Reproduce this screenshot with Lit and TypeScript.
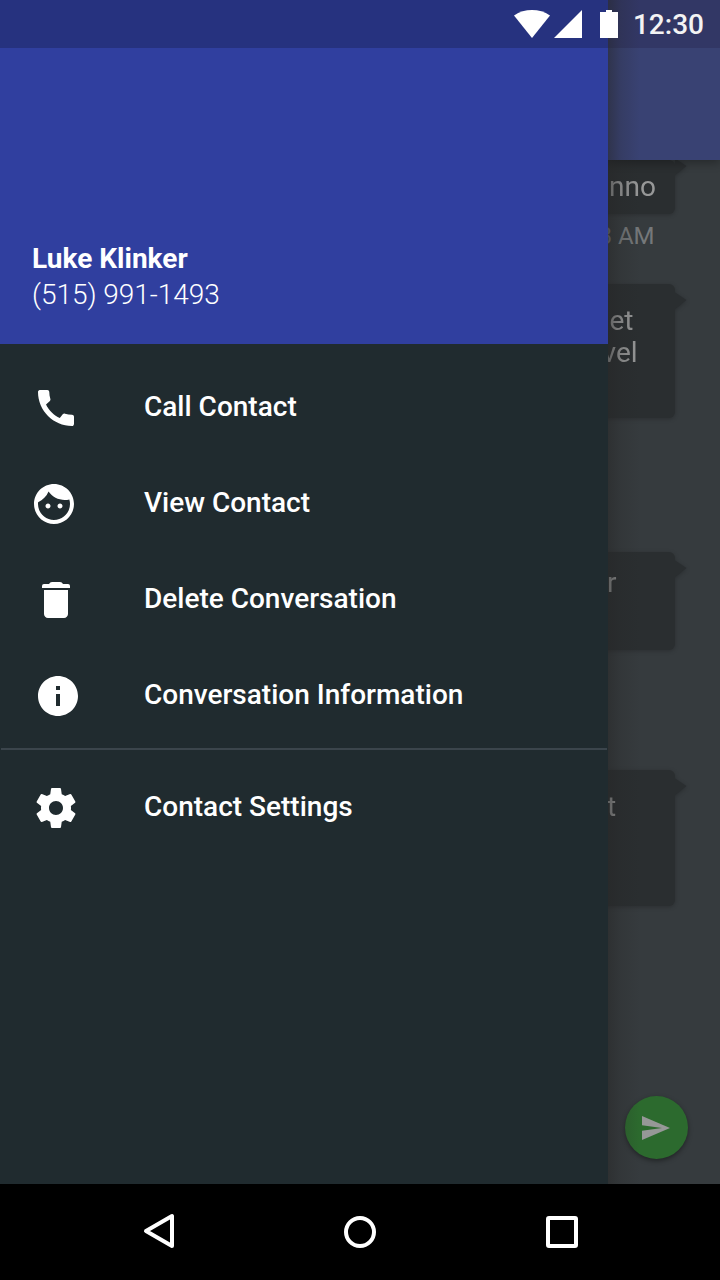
import { LitElement, html, css, svg } from "lit";
import { customElement } from "lit/decorators.js";

const ICONS = {
  call: "M20.01 15.38c-1.23 0-2.42-.2-3.53-.56-.35-.12-.74-.03-1.01.24l-1.57 1.97c-2.83-1.35-5.48-3.9-6.89-6.83l1.95-1.66c.27-.28.35-.67.24-1.02-.37-1.11-.56-2.3-.56-3.53 0-.54-.45-.99-.99-.99H4.19C3.65 3 3 3.24 3 3.99 3 13.28 10.73 21 20.01 21c.71 0 .99-.63.99-1.18v-3.45c0-.54-.45-.99-.99-.99z",
  face: "M9 11.75c-.69 0-1.25.56-1.25 1.25s.56 1.25 1.25 1.25 1.25-.56 1.25-1.25-.56-1.25-1.25-1.25zm6 0c-.69 0-1.25.56-1.25 1.25s.56 1.25 1.25 1.25 1.25-.56 1.25-1.25-.56-1.25-1.25-1.25zM12 2C6.48 2 2 6.48 2 12s4.48 10 10 10 10-4.48 10-10S17.52 2 12 2zm0 18c-4.41 0-8-3.59-8-8 0-.29.02-.58.05-.86 2.36-1.05 4.23-2.98 5.21-5.37C11.07 8.33 14.05 10 17.42 10c.78 0 1.53-.09 2.25-.26.21.71.33 1.47.33 2.26 0 4.41-3.59 8-8 8z",
  trash: "M6 19c0 1.1.9 2 2 2h8c1.1 0 2-.9 2-2V7H6v12zM18 4h-2.500Q15 3 14 3h-4Q9 3 8.500 4H6Q5 4 5 5v1h14V5Q19 4 18 4z",
  info: "M12 2C6.48 2 2 6.480 2 12s4.480 10 10 10 10-4.480 10-10S17.520 2 12 2zm1 15h-2v-6h2v6zm0-8h-2V7h2v2z",
  gear: "M19.430 12.980c.04-.32.07-.64.07-.98s-.03-.66-.07-.98l2.110-1.650c.19-.15.24-.42.12-.64l-2-3.460c-.12-.22-.39-.3-.61-.22l-2.490 1c-.52-.4-1.080-.73-1.690-.98l-.38-2.650C14.460 2.180 14.250 2 14 2h-4c-.25 0-.46.18-.49.42l-.38 2.650c-.61.25-1.170.59-1.690.98l-2.490-1c-.23-.09-.49 0-.61.22l-2 3.460c-.13.22-.07.49.12.64l2.110 1.650c-.04.32-.07.65-.07.98s.03.66.07.98l-2.110 1.650c-.19.15-.24.42-.12.64l2 3.460c.12.22.39.3.61.22l2.490-1c.52.4 1.080.73 1.690.98l.38 2.650c.03.24.24.42.49.42h4c.25 0 .46-.18.49-.42l.38-2.650c.61-.25 1.170-.59 1.690-.98l2.490 1c.23.09.49 0 .61-.22l2-3.460c.12-.22.07-.49-.12-.64l-2.110-1.650zM12 15.500c-1.930 0-3.500-1.570-3.500-3.500s1.570-3.500 3.500-3.500 3.500 1.570 3.500 3.500-1.570 3.500-3.500 3.500z",
};

const icon = (d: string) => svg`<svg width="48" height="48" viewBox="0 0 24 24"><path fill="#fff" d=${d}></path></svg>`;

@customElement("app-root")
export class AppRoot extends LitElement {
  static styles = css`
    :host { display: block; width: 720px; height: 1280px; position: relative; overflow: hidden;
      background: #363b3e; font-family: Roboto, sans-serif; color: #fff; }
    * { box-sizing: border-box; }
    svg { display: block; flex: none; }
    .screen { display: flex; flex-direction: column; height: 1280px; }
    .toolbar { height: 160px; flex: none; border-top: 48px solid #323765; background: #394273; position: relative; z-index: 1;
      box-shadow: 0 3px 9px rgba(0,0,0,.3); }
    .thread { flex: 1; min-height: 0; display: flex; flex-direction: column; align-items: flex-end;
      padding-right: 45.500px; color: #979898; font-size: 28px; line-height: 32px; }
    .bubble { width: 180px; flex: none; background: #2a2e30; border-radius: 0 6px 6px 0; position: relative;
      filter: drop-shadow(0 1px 2px rgba(0,0,0,.22)); }
    .bubble::after { content: ""; position: absolute; left: 100%; top: 8px; width: 12px; height: 18px;
      background: #2a2e30; clip-path: polygon(0 0, 100% 45%, 0 100%); }
    .b1 { height: 54px; padding: 11px 0 0 114.500px; }
    .b1::after { top: -2px; }
    .b2 { height: 134px; margin-top: 30px; padding: 21px 0 0 115px; }
    .b2 .second { display: block; margin-left: -7px; }
    .b3 { height: 98px; margin-top: 134px; padding: 15px 0 0 112.500px; }
    .b4 { height: 136px; margin-top: 120px; padding: 21px 0 0 112.500px; }
    .stamp { height: 40px; padding: 7px 20px 0 0; font-size: 24px; line-height: 30px; color: #75787a; }
    .fab { width: 63px; height: 63px; border-radius: 50%; margin: 190px -13px 0 0; background: #2c6a2e;
      display: flex; align-items: center; justify-content: center; flex: none;
      box-shadow: 0 2px 5px rgba(0,0,0,.4); }
    .nav { height: 96px; flex: none; background: #000; position: relative; z-index: 3; }
    .drawer { position: absolute; left: 0; top: 0; width: 608px; height: 1184px; background: #202b2f; z-index: 2; }
    .drawer::after { content: ""; position: absolute; left: 100%; top: 0; width: 32px; height: 100%;
      background: linear-gradient(90deg, rgba(38,38,38,.5), rgba(38,38,38,.2) 40%, rgba(38,38,38,0)); }
    .head { height: 344px; background: #303f9f; border-top: 48px solid #26327f; padding: 193px 32px 0; font-size: 28px; line-height: 36px; }
    .name { font-weight: 700; }
    .phone { font-weight: 300; letter-spacing: -0.04px; }
    .menu { padding-top: 16px; }
    .item { height: 96px; display: flex; align-items: center; padding-left: 32px; font-size: 28px; font-weight: 500; }
    .slot { width: 112px; flex: none; }
    .face { margin-left: -2px; }
    .info { margin-left: 2px; }
    .label { line-height: 36px; padding-bottom: 2px; }
    .rule { height: 2px; margin: 4px 1px 10px; background: #3b454c; }
    .status { position: absolute; z-index: 4; left: 0; top: 0; width: 720px; height: 48px; display: flex;
      justify-content: flex-end; align-items: center; padding-right: 16px;
      font-size: 28px; font-weight: 500; }
    .clock { color: #f3f3f3; margin-left: 13px; line-height: 46px; padding-top: 2px; }
  `;

  private item(d: string, label: string, cls = "") {
    return html`<div class="item"><div class="slot"><div class=${cls}>${icon(d)}</div></div><div class="label">${label}</div></div>`;
  }

  render() {
    return html`
      <div class="screen">
        <div class="toolbar"></div>
        <div class="thread">
          <div class="bubble b1">nno</div>
          <div class="stamp">8 AM</div>
          <div class="bubble b2">et<span class="second">vel</span></div>
          <div class="bubble b3">r</div>
          <div class="bubble b4">t</div>
          <div class="fab">
            <svg width="32" height="32" viewBox="0 0 32 32"><path fill="#969897" d="M2 4L30 16L2 28V18.700L22 16L2 13.300Z"></path></svg>
          </div>
        </div>
        <div class="nav">
          <svg width="720" height="96" viewBox="0 0 720 96" fill="none" stroke="#fff" stroke-width="4" stroke-linejoin="round">
            <path d="M172 32V46.500V62L146 47Z"></path>
            <circle cx="360" cy="48" r="14"></circle>
            <rect x="548" y="34" width="28" height="28" rx="1"></rect>
          </svg>
        </div>
      </div>
      <div class="drawer">
        <div class="head">
          <div class="name">Luke Klinker</div>
          <div class="phone">(515) 991-1493</div>
        </div>
        <div class="menu">
          ${this.item(ICONS.call, "Call Contact")}
          ${this.item(ICONS.face, "View Contact", "face")}
          ${this.item(ICONS.trash, "Delete Conversation")}
          ${this.item(ICONS.info, "Conversation Information", "info")}
          <div class="rule"></div>
          ${this.item(ICONS.gear, "Contact Settings")}
        </div>
      </div>
      <div class="status">
        <svg width="106" height="48" viewBox="0 0 106 48" fill="#fff">
          <path d="M0 15.500C10.500 8.200 25.500 8.200 36 15.500L18 38Z"></path>
          <path d="M40 38L68 10V38Z"></path>
          <path d="M86 12H92V10H98V12H104V38H86Z"></path>
        </svg>
        <div class="clock">12:30</div>
      </div>
    `;
  }
}
